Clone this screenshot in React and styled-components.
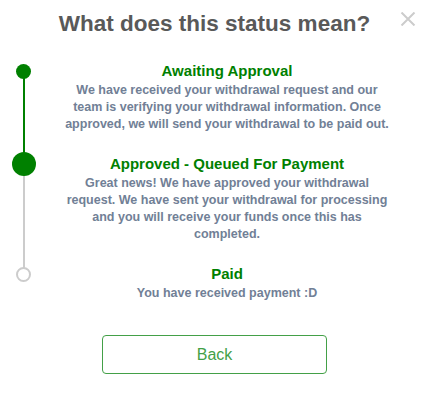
import React from 'react';
import styled, { createGlobalStyle } from 'styled-components';

const GlobalStyle = createGlobalStyle`
  html, body {
    margin: 0;
    padding: 0;
    background: #fff;
  }
  body {
    font-family: "Liberation Sans", Arial, sans-serif;
  }
`;

const Modal = styled.div`
  position: relative;
  width: 429px;
  height: 401px;
  box-sizing: border-box;
  padding: 10px 0 0;
  background: #fff;
`;

const Title = styled.h2`
  margin: 0;
  font-size: 22.5px;
  font-weight: bold;
  color: #595959;
  text-align: center;
  line-height: 27px;
`;

const CloseButton = styled.button`
  position: absolute;
  top: 12px;
  right: 13px;
  width: 16px;
  height: 14px;
  padding: 0;
  border: none;
  background: none;
  cursor: pointer;
  display: flex;

  svg {
    display: block;
  }
`;

const Timeline = styled.ol`
  list-style: none;
  margin: 25px 22px 0 0;
  padding: 0;
`;

const Step = styled.li`
  display: grid;
  grid-template-columns: 47px 1fr;
`;

const Marker = styled.div`
  display: flex;
  flex-direction: column;
  align-items: center;
`;

const DotSlot = styled.div`
  height: 18px;
  display: flex;
  align-items: center;
  justify-content: center;
  position: relative;
  z-index: 1;
`;

const Dot = styled.span`
  flex: none;
  box-sizing: border-box;
  width: ${p => (p.$current ? '24px' : '15px')};
  height: ${p => (p.$current ? '24px' : '15px')};
  border-radius: 50%;
  background: ${p => (p.$done ? '#008000' : '#fff')};
  border: ${p => (p.$done ? 'none' : '2px solid #cccccc')};
`;

const Connector = styled.span`
  flex: 1;
  width: 2px;
  margin-top: -9px;
  margin-bottom: -9px;
  background: ${p => (p.$done ? '#008000' : '#cccccc')};
`;

const Body = styled.div`
  padding: 0 15px ${p => (p.$last ? '0' : '22px')};
  text-align: center;
`;

const StepTitle = styled.h3`
  margin: 0;
  font-size: 15px;
  line-height: 18px;
  font-weight: bold;
  color: #008000;
`;

const StepText = styled.p`
  margin: 2px 0 0;
  font-size: 12.5px;
  line-height: 17px;
  font-weight: bold;
  color: #718096;
`;

const Footer = styled.div`
  display: flex;
  justify-content: center;
  padding-top: 33px;
`;

const BackButton = styled.button`
  width: 225px;
  height: 39px;
  box-sizing: border-box;
  border: 1px solid #43a047;
  border-radius: 4px;
  background: #fff;
  color: #43a047;
  font-family: "Liberation Sans", Arial, sans-serif;
  font-size: 16px;
  cursor: pointer;
`;

const steps = [
  {
    title: 'Awaiting Approval',
    text: 'We have received your withdrawal request and our team is verifying your withdrawal information. Once approved, we will send your withdrawal to be paid out.',
    done: true,
  },
  {
    title: 'Approved - Queued For Payment',
    text: 'Great news! We have approved your withdrawal request. We have sent your withdrawal for processing and you will receive your funds once this has completed.',
    done: true,
    current: true,
  },
  {
    title: 'Paid',
    text: 'You have received payment :D',
    done: false,
  },
];

const CloseIcon = () => (
  <svg width="16" height="14" viewBox="0 0 16 14">
    <path d="M1.5 0.5 L14.5 13.5 M14.5 0.5 L1.5 13.5" stroke="#cccccc" strokeWidth="2" fill="none" />
  </svg>
);

export default function App() {
  return (
    <>
      <GlobalStyle />
      <Modal>
        <Title>What does this status mean?</Title>
        <CloseButton aria-label="Close">
          <CloseIcon />
        </CloseButton>
        <Timeline>
          {steps.map((step, i) => {
            const last = i === steps.length - 1;
            return (
              <Step key={step.title}>
                <Marker>
                  <DotSlot>
                    <Dot $done={step.done} $current={step.current} />
                  </DotSlot>
                  {!last && <Connector $done={!step.current} />}
                </Marker>
                <Body $last={last}>
                  <StepTitle>{step.title}</StepTitle>
                  <StepText>{step.text}</StepText>
                </Body>
              </Step>
            );
          })}
        </Timeline>
        <Footer>
          <BackButton>Back</BackButton>
        </Footer>
      </Modal>
    </>
  );
}
